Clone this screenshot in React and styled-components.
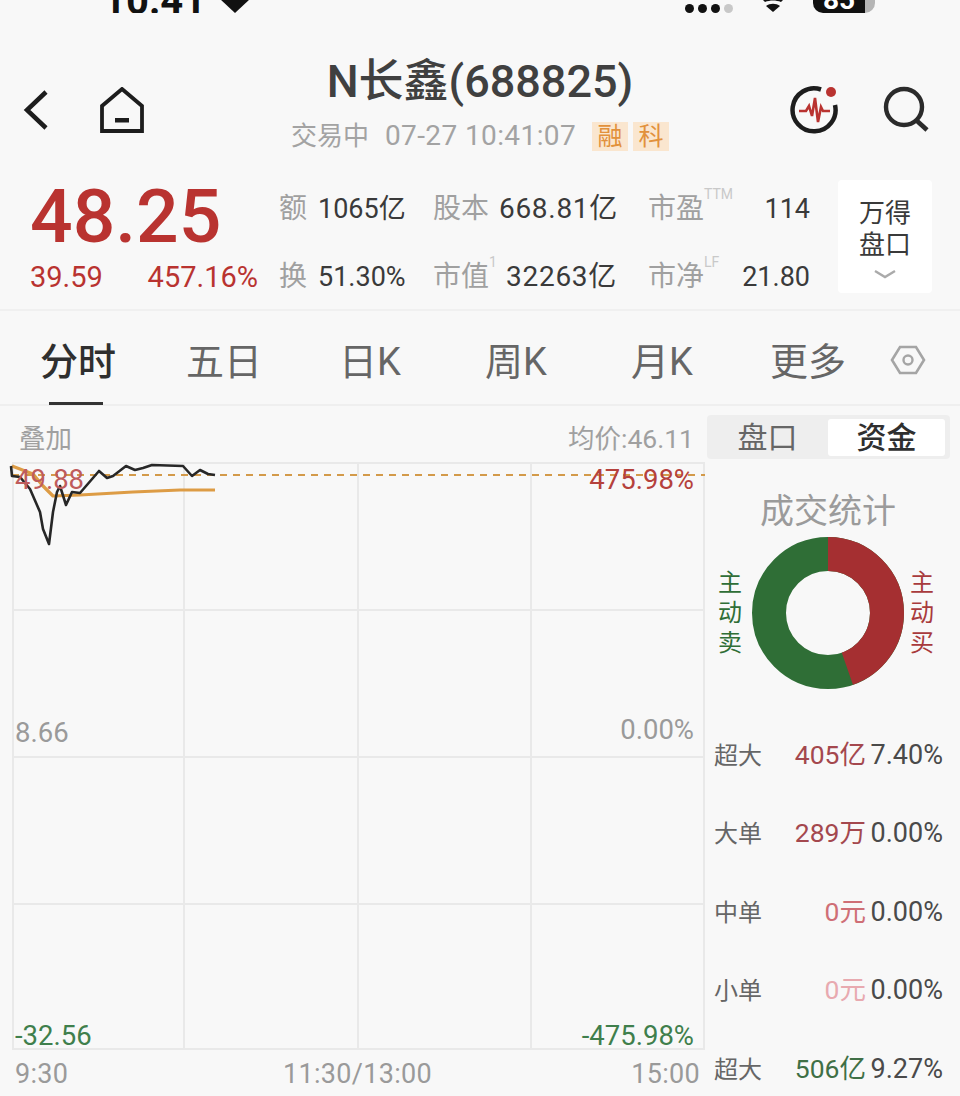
import React from 'react';
import styled, { createGlobalStyle } from 'styled-components';

const GlobalStyle = createGlobalStyle`
	html, body {
		margin: 0;
		padding: 0;
		background: #f8f8f8;
	}
`;

const FONT = `Roboto, "Noto Sans CJK SC", "Noto Sans", sans-serif`;
const RED = '#b93330';
const GREEN = '#2f6e36';

const tabs = ['分时', '五日', '日K', '周K', '月K', '更多'];

const flows = [
	{ name: '超大', amount: '405亿', pct: '7.40%', color: '#a4484e' },
	{ name: '大单', amount: '289万', pct: '0.00%', color: '#a4484e' },
	{ name: '中单', amount: '0元', pct: '0.00%', color: '#cf6f76' },
	{ name: '小单', amount: '0元', pct: '0.00%', color: '#e8aab0' },
	{ name: '超大', amount: '506亿', pct: '9.27%', color: '#3f7046' },
];

const pricePath =
	'M-1 4 L0 14 L8 15 L18 27 L28 50 L31 67 L37 82 L41 50 L45 30 L48 24 L54 43 L60 30 L68 31 L87 9 L95 16 L101 14 L114 4 L123 8 L131 6 L140 3 L171 4 L180 14 L188 8 L196 12 L203 13';
const avgPath = 'M0 4 L21 12 L31 24 L41 34 L68 33 L121 30 L168 28 L203 28';

export default function App() {
	return (
		<Page>
			<GlobalStyle />
			<StatusBar>
				<Clock>10:41</Clock>
				<svg width='34' height='13' viewBox='0 0 34 13'>
					<path d='M17 13 L2 -1 C-2 -7 2 -14 9 -14 L25 -14 C32 -14 36 -7 32 -1 Z' fill='#111' />
				</svg>
				<StatusRight>
					<Signal>
						<Dot />
						<Dot />
						<Dot />
						<Dot $off />
					</Signal>
					<svg width='24' height='13' viewBox='0 0 24 13'>
						<path d='M5 6 L12 12 L19 6 C15 3 9 3 5 6 Z' fill='#111' />
						<path d='M2 0 C8 -1 16 -1 22 0 L20 2 C15 0 9 0 4 2 Z' fill='#111' />
					</svg>
					<Battery>
						<BatteryLevel>85</BatteryLevel>
						<BatteryRest />
					</Battery>
				</StatusRight>
			</StatusBar>

			<Header>
				<NavIcons>
					<svg width='30' height='44' viewBox='0 0 30 44'>
						<path d='M25 4 L6 22 L25 40' fill='none' stroke='#1d1d1d' strokeWidth='4.5' />
					</svg>
					<svg width='44' height='46' viewBox='0 0 44 46'>
						<path d='M22 2 L42 19 L42 44 L2 44 L2 19 Z' fill='none' stroke='#1d1d1d' strokeWidth='3.8' />
						<rect x='15' y='31' width='14' height='4.5' fill='#1d1d1d' />
					</svg>
				</NavIcons>
				<TitleBlock>
					<Title>N长鑫(688825)</Title>
					<SubTitle>
						<span>交易中</span>
						<DateText>07-27 10:41:07</DateText>
						<Tags>
							<Tag>融</Tag>
							<Tag>科</Tag>
						</Tags>
					</SubTitle>
				</TitleBlock>
				<ActionIcons>
					<svg width='50' height='50' viewBox='0 0 50 50'>
						<path d='M32 4.5 A21.5 21.5 0 1 0 46 20' fill='none' stroke='#1d1d1d' strokeWidth='4.5' />
						<path
							d='M10 26 L17 26 L20 21 L23 31 L26 13 L29 37 L32 22 L34 26 L41 26'
							fill='none'
							stroke={RED}
							strokeWidth='2.6'
						/>
						<circle cx='42' cy='7' r='5' fill={RED} />
					</svg>
					<svg width='48' height='48' viewBox='0 0 48 48'>
						<circle cx='21' cy='21' r='18' fill='none' stroke='#2b2b2b' strokeWidth='4.4' />
						<path d='M33 34 L44 44' stroke='#2b2b2b' strokeWidth='4.6' />
					</svg>
				</ActionIcons>
			</Header>

			<Quote>
				<PriceBlock>
					<Price>48.25</Price>
					<Change>
						<span>39.59</span>
						<span>457.16%</span>
					</Change>
				</PriceBlock>
				<Stats>
					<StatLabel>额</StatLabel>
					<StatValue>1065亿</StatValue>
					<StatLabel>股本</StatLabel>
					<StatValue $wide>668.81亿</StatValue>
					<StatLabel $inset>
						市盈<Sup>TTM</Sup>
					</StatLabel>
					<StatValue $right>114</StatValue>
					<StatLabel>换</StatLabel>
					<StatValue>51.30%</StatValue>
					<StatLabel>
						市值<Sup>1</Sup>
					</StatLabel>
					<StatValue $wide>32263亿</StatValue>
					<StatLabel $inset>
						市净<Sup>LF</Sup>
					</StatLabel>
					<StatValue $right>21.80</StatValue>
				</Stats>
				<DepthButton>
					<span>万得</span>
					<span>盘口</span>
					<svg width='24' height='10' viewBox='0 0 24 10'>
						<path d='M2 2 L12 8 L22 2' fill='none' stroke='#aaa' strokeWidth='2.4' />
					</svg>
				</DepthButton>
			</Quote>

			<TabBar>
				{tabs.map((tab, i) => (
					<Tab key={tab} $active={i === 0}>
						{tab}
					</Tab>
				))}
				<HexButton>
					<svg width='36' height='30' viewBox='0 0 36 30'>
						<path d='M10 2 L26 2 L34 15 L26 28 L10 28 L2 15 Z' fill='none' stroke='#a5a5a5' strokeWidth='2.6' />
						<circle cx='18' cy='15' r='4.5' fill='none' stroke='#a5a5a5' strokeWidth='2.4' />
					</svg>
				</HexButton>
			</TabBar>

			<Body>
				<ChartColumn>
					<ChartHeader>
						<span>叠加</span>
						<span>均价:46.11</span>
					</ChartHeader>
					<Plot>
						{Array.from({ length: 16 }, (_, i) => (
							<Cell key={i} />
						))}
						<Lines width='693' height='587' viewBox='0 0 693 587'>
							<path d='M0 13 L693 13' stroke='#d39a4a' strokeWidth='2.2' strokeDasharray='7 6' fill='none' />
							<path d={avgPath} stroke='#dd9c45' strokeWidth='3.2' fill='none' strokeLinejoin='round' />
							<path d={pricePath} stroke='#272727' strokeWidth='2.6' fill='none' strokeLinejoin='round' />
						</Lines>
						<PlotLabel $top='1px' $left='1px' $color='#bf5c5c'>49.88</PlotLabel>
						<PlotLabel $top='1px' $right='11px' $color='#b5413c'>475.98%</PlotLabel>
						<PlotLabel $top='254px' $left='1px' $color='#9a9a9a'>8.66</PlotLabel>
						<PlotLabel $top='251px' $right='11px' $color='#9a9a9a'>0.00%</PlotLabel>
						<PlotLabel $top='557px' $left='1px' $color='#3f7f4c'>-32.56</PlotLabel>
						<PlotLabel $top='557px' $right='11px' $color='#3f7f4c'>-475.98%</PlotLabel>
					</Plot>
					<TimeAxis>
						<span>9:30</span>
						<span>11:30/13:00</span>
						<AxisEnd>15:00</AxisEnd>
					</TimeAxis>
				</ChartColumn>

				<Side>
					<Switch>
						<SwitchItem>盘口</SwitchItem>
						<SwitchItem $active>资金</SwitchItem>
					</Switch>
					<SideTitle>成交统计</SideTitle>
					<DonutRow>
						<VerticalLabel $color={GREEN}>主动卖</VerticalLabel>
						<svg width='152' height='152' viewBox='0 0 152 152'>
							<circle cx='76' cy='76' r='59' fill='none' stroke={GREEN} strokeWidth='34' />
							<circle
								cx='76'
								cy='76'
								r='59'
								fill='none'
								stroke='#a52f31'
								strokeWidth='34'
								strokeDasharray='165.3 370.7'
								transform='rotate(-90 76 76)'
							/>
						</svg>
						<VerticalLabel $color='#a83a3c'>主动买</VerticalLabel>
					</DonutRow>
					<FlowList>
						{flows.map((row, i) => (
							<FlowRow key={i}>
								<FlowName>{row.name}</FlowName>
								<FlowAmount $color={row.color}>{row.amount}</FlowAmount>
								<FlowPct>{row.pct}</FlowPct>
							</FlowRow>
						))}
					</FlowList>
				</Side>
			</Body>
		</Page>
	);
}

const Page = styled.div`
	width: 960px;
	height: 1096px;
	overflow: hidden;
	background: #f8f8f8;
	font-family: ${FONT};
	color: #333;
`;

const StatusBar = styled.div`
	display: flex;
	align-items: flex-end;
	gap: 12px;
	height: 13px;
	padding-left: 103px;
	overflow: hidden;
`;

const Clock = styled.div`
	font-size: 40px;
	font-weight: 700;
	line-height: 40px;
	margin-bottom: -8px;
	color: #111;
`;

const StatusRight = styled.div`
	display: flex;
	align-items: flex-end;
	gap: 28px;
	margin-left: auto;
	padding-right: 85px;
`;

const Signal = styled.div`
	display: flex;
	gap: 4px;
`;

const Dot = styled.i`
	width: 9px;
	height: 9px;
	border-radius: 50%;
	background: ${(p) => (p.$off ? '#c8c8c8' : '#111')};
`;

const Battery = styled.div`
	display: flex;
	width: 62px;
	height: 13px;
	border-radius: 0 0 10px 10px;
	overflow: hidden;
`;

const BatteryLevel = styled.div`
	flex: 1;
	background: #111;
	color: #fff;
	font-size: 28px;
	font-weight: 700;
	line-height: 0;
	text-align: center;
`;

const BatteryRest = styled.div`
	width: 10px;
	background: #b5b5b5;
`;

const Header = styled.header`
	display: grid;
	grid-template-columns: 1fr auto 1fr;
	align-items: start;
	height: 165px;
`;

const NavIcons = styled.div`
	display: flex;
	align-items: center;
	gap: 49px;
	padding: 74px 0 0 21px;
`;

const TitleBlock = styled.div`
	display: flex;
	flex-direction: column;
	align-items: center;
	padding-top: 41px;
`;

const Title = styled.h1`
	margin: 0;
	font-size: 45px;
	font-weight: 500;
	line-height: 56px;
	color: #404040;
	white-space: nowrap;
`;

const SubTitle = styled.div`
	display: flex;
	align-items: center;
	gap: 16px;
	margin-top: 11px;
	font-size: 26px;
	line-height: 30px;
	color: #a3a3a3;
	white-space: nowrap;
`;

const DateText = styled.span`
	font-size: 28px;
	letter-spacing: 0.4px;
`;

const Tags = styled.div`
	display: flex;
	gap: 5px;
`;

const Tag = styled.span`
	width: 36px;
	height: 29px;
	background: #fae6cf;
	color: #e2913c;
	font-size: 25px;
	line-height: 29px;
	text-align: center;
`;

const ActionIcons = styled.div`
	display: flex;
	justify-content: flex-end;
	align-items: center;
	gap: 44px;
	padding: 72px 29px 0 0;
`;

const Quote = styled.section`
	display: flex;
	align-items: flex-start;
	height: 131px;
	padding-left: 30px;
	border-bottom: 2px solid #f0f0f0;
`;

const PriceBlock = styled.div`
	display: flex;
	flex-direction: column;
	width: 228px;
	color: ${RED};
`;

const Price = styled.div`
	font-size: 75px;
	font-weight: 500;
	line-height: 80px;
	margin-top: -2px;
`;

const Change = styled.div`
	display: flex;
	justify-content: space-between;
	margin-top: 5px;
	font-size: 29px;
	line-height: 32px;
`;

const Stats = styled.div`
	display: grid;
	grid-template-columns: 39px 115px 66px 118px 88px 105px;
	grid-auto-rows: 68px;
	align-items: center;
	margin-left: 21px;
	margin-top: -3px;
`;

const StatLabel = styled.div`
	position: relative;
	justify-self: start;
	margin-left: ${(p) => (p.$inset ? '31px' : '0')};
	font-size: 28px;
	line-height: 34px;
	color: #a0a0a0;
	white-space: nowrap;
`;

const StatValue = styled.div`
	font-size: ${(p) => (p.$wide ? '28px' : '27px')};
	letter-spacing: ${(p) => (p.$wide ? '0.7px' : '0')};
	line-height: 34px;
	color: #3a3a3a;
	white-space: nowrap;
	text-align: ${(p) => (p.$wide || p.$right ? 'right' : 'left')};
`;

const Sup = styled.sup`
	position: absolute;
	top: -6px;
	left: 100%;
	font-size: 14px;
	line-height: 16px;
	color: #c9c9c9;
`;

const DepthButton = styled.button`
	display: flex;
	flex-direction: column;
	align-items: center;
	width: 94px;
	height: 113px;
	margin: 2px 0 0 28px;
	padding: 17px 0 0;
	border: 0;
	border-radius: 4px;
	background: #fff;
	color: #3a3a3a;
	font-family: ${FONT};
	font-size: 26px;
	line-height: 32px;
	box-sizing: border-box;

	svg {
		margin-top: 8px;
	}
`;

const TabBar = styled.nav`
	display: grid;
	grid-template-columns: repeat(6, 146px) 1fr;
	align-items: center;
	height: 93px;
	padding-left: 5px;
	border-bottom: 2px solid #efefef;
`;

const Tab = styled.div`
	position: relative;
	height: 93px;
	font-size: 38px;
	font-weight: ${(p) => (p.$active ? 500 : 400)};
	line-height: 102px;
	text-align: center;
	color: ${(p) => (p.$active ? '#2f2f2f' : '#666')};

	&::after {
		content: '';
		display: ${(p) => (p.$active ? 'block' : 'none')};
		position: absolute;
		left: 44px;
		bottom: -1px;
		width: 54px;
		height: 3px;
		background: #333;
	}
`;

const HexButton = styled.div`
	display: flex;
	justify-content: center;
	padding: 5px 26px 0 0;
`;

const Body = styled.main`
	display: flex;
`;

const ChartColumn = styled.div`
	width: 705px;
	padding-left: 12px;
	box-sizing: border-box;
`;

const ChartHeader = styled.div`
	display: flex;
	justify-content: space-between;
	align-items: center;
	height: 56px;
	padding: 4px 11px 0 7px;
	box-sizing: border-box;
	font-size: 26.5px;
	color: #a0a0a0;
`;

const Plot = styled.div`
	position: relative;
	display: grid;
	grid-template-columns: 171px 174px 173px 1fr;
	grid-template-rows: 147px 147px 147px 1fr;
	height: 588px;
	box-sizing: border-box;
	border: solid #e9e9e9;
	border-width: 2px 0 2px 2px;
`;

const Cell = styled.div`
	border-right: 2px solid #e9e9e9;
	border-bottom: 2px solid #e9e9e9;

	&:nth-child(n + 13) {
		border-bottom: 0;
	}
`;

const Lines = styled.svg`
	position: absolute;
	top: -2px;
	left: -2px;
	overflow: visible;
`;

const PlotLabel = styled.span`
	position: absolute;
	top: ${(p) => p.$top};
	left: ${(p) => p.$left || 'auto'};
	right: ${(p) => p.$right || 'auto'};
	font-size: 27.5px;
	line-height: 30px;
	color: ${(p) => p.$color};
`;

const TimeAxis = styled.div`
	display: grid;
	grid-template-columns: 1fr auto 1fr;
	padding: 9px 5px 0 3px;
	font-size: 27px;
	letter-spacing: 0.3px;
	line-height: 30px;
	color: #9a9a9a;
`;

const AxisEnd = styled.span`
	text-align: right;
`;

const Side = styled.aside`
	width: 255px;
	padding-top: 9px;
	box-sizing: border-box;
`;

const Switch = styled.div`
	display: grid;
	grid-template-columns: 121px 117px;
	align-items: center;
	width: 243px;
	height: 44px;
	margin-left: 2px;
	background: #eee;
	border-radius: 4px;
	box-sizing: border-box;
	padding: 2px 0;
`;

const SwitchItem = styled.div`
	height: 37px;
	font-size: 30px;
	line-height: 37px;
	font-weight: ${(p) => (p.$active ? 500 : 400)};
	text-align: center;
	background: ${(p) => (p.$active ? '#fff' : 'transparent')};
	color: ${(p) => (p.$active ? '#2f2f2f' : '#666')};
	border-radius: 3px;
`;

const SideTitle = styled.div`
	margin-top: 29px;
	padding-right: 9px;
	font-size: 34px;
	line-height: 46px;
	text-align: center;
	color: #9b9b9b;
`;

const DonutRow = styled.div`
	display: flex;
	align-items: center;
	margin-top: 3px;
	padding-left: 13px;

	svg {
		margin: 0 6px 0 10px;
	}
`;

const VerticalLabel = styled.div`
	width: 24px;
	font-size: 24px;
	line-height: 30px;
	text-align: center;
	color: ${(p) => p.$color};
`;

const FlowList = styled.div`
	display: grid;
	grid-auto-rows: 78.5px;
	margin-top: 24px;
	padding: 0 17px 0 9px;
`;

const FlowRow = styled.div`
	display: grid;
	grid-template-columns: 1fr auto 77px;
	align-content: center;
	align-items: baseline;
`;

const FlowName = styled.span`
	font-size: 24px;
	color: #666;
`;

const FlowAmount = styled.span`
	font-size: 26.5px;
	color: ${(p) => p.$color};
`;

const FlowPct = styled.span`
	font-size: 27px;
	text-align: right;
	color: #4a4a4a;
`;
